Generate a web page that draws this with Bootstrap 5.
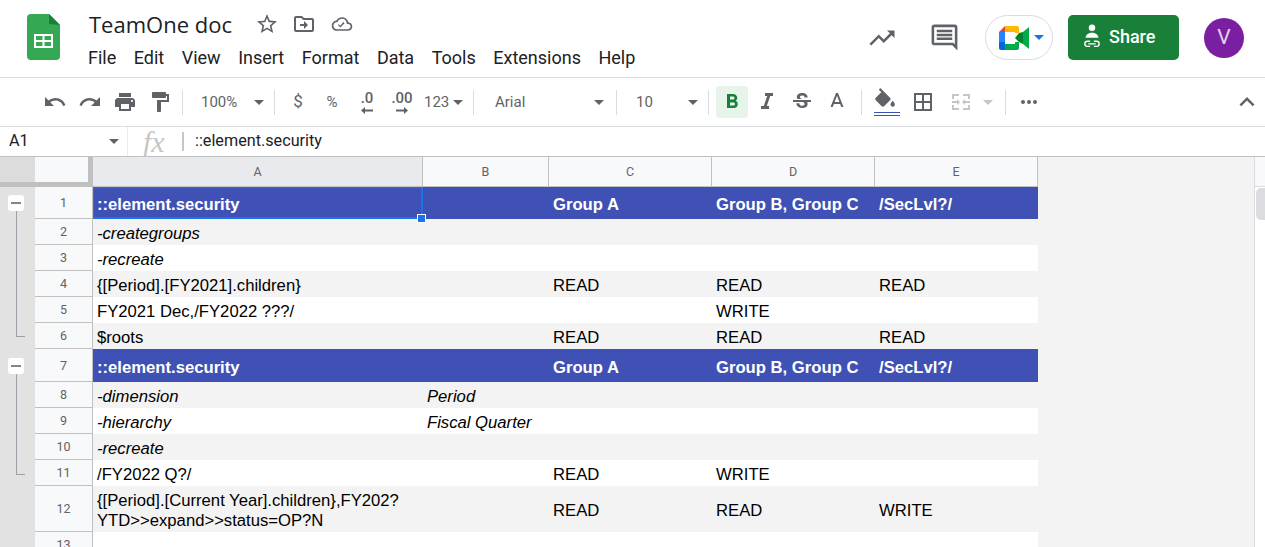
<!DOCTYPE html>
<html lang="en">
<head>
    <meta charset="UTF-8">
    <title>TeamOne doc</title>
    <link href="https://cdn.jsdelivr.net/npm/bootstrap@5.3.0/dist/css/bootstrap.min.css" rel="stylesheet">
    <style>
        html, body {
            height: 547px;
            overflow: hidden;
        }
        body {
            font-family: Roboto, "Liberation Sans", sans-serif;
            color: #202124;
            background: #fff;
        }
        svg { display: block; fill: currentColor; }

        /* title bar */
        .top-bar {
            height: 78px;
            border-bottom: 1px solid #dadce0;
            padding-left: 27px;
            padding-right: 21px;
        }
        .doc-logo { width: 33px; height: 46px; margin-top: 14px; margin-right: 29px; }
        .doc-title { font-family: "Open Sans", sans-serif; font-size: 22px; line-height: 30px; margin-top: 9px; margin-right: 23px; }
        .title-icon { color: #5f6368; margin-top: 12px; margin-right: 13.5px; width: 24px; height: 24px; }
        .menu-row { font-size: 18px; line-height: 24px; margin-top: 7px; margin-left: -1px; gap: 17.5px; }
        .right-icon { color: #5f6368; }
        .meet-pill {
            width: 68px; height: 45px;
            border: 1px solid #dadce0;
            border-radius: 23px;
            padding-left: 13px;
            margin-left: 25px;
            margin-right: 15px;
        }
        .share-btn {
            width: 111px; height: 45px;
            background: #188038;
            border-radius: 5px;
            color: #fff;
            font-size: 18px;
            font-weight: 500;
            padding-left: 14px;
            padding-bottom: 3px;
            gap: 7px;
        }
        .user-pic {
            width: 40px; height: 40px;
            margin-left: 25px;
            background: #7b1fa2;
            color: #e6d5ee;
            font-size: 21px;
        }
        .meet-arrow { border-left: 5px solid transparent; border-right: 5px solid transparent; border-top: 5px solid #1a73e8; margin-left: 5px; }

        /* toolbar */
        .tool-bar {
            height: 49px;
            border-bottom: 1px solid #dadce0;
            padding-left: 37px;
            padding-right: 1px;
            color: #5f6368;
            font-size: 15px;
        }
        .tb-btn { width: 35px; height: 32px; flex: none; }
        .tb-sep { width: 1px; height: 25px; background: #dadce0; flex: none; }
        .tb-caret { border-left: 5px solid transparent; border-right: 5px solid transparent; border-top: 5px solid #5f6368; flex: none; }
        .tb-zoom { width: 91px; padding-left: 18px; padding-right: 10px; }
        .tb-font { width: 142px; padding-left: 21px; padding-right: 12px; }
        .tb-size { width: 91px; padding-left: 19px; padding-right: 10px; }
        .tb-num { width: 49px; margin-left: 4.5px; }
        .tb-more { width: 34px; margin-left: 6px; }
        .btn-active { background: #e6f4ea; color: #188038; border-radius: 3px; width: 32px; margin-left: 7px; margin-right: 1.5px; }
        .dec-text { font-size: 15px; line-height: 15px; font-weight: 500; }
        .dec-arrow { margin-top: 1px; }
        .sign-big { font-size: 17px; margin-left: 5.5px; margin-right: -1px; }
        .sep-first { margin-left: 5px; }
        .sep-fill { margin-left: 6.5px; margin-right: 4.5px; }
        .gap-borders { margin-left: 4px; }
        .gap-merge { margin-left: 3px; }
        .caret-off { border-top-color: #c4c7c5; margin-left: 4.5px; margin-right: 12px; }
        .is-off { color: #c4c7c5; }
        .fill-bar { width: 26px; height: 4px; border-top: 1px solid #3f51b5; border-bottom: 1px solid #3f51b5; margin-top: 2px; margin-left: 5px; }

        /* formula bar */
        .formula-bar {
            height: 30px;
            border-bottom: 1px solid #c0c0c0;
            font-size: 16.2px;
        }
        .name-box { width: 128px; height: 29px; padding: 0 8px 0 9px; border-right: 1px solid #e8eaed; }
        .fx-mark { width: 54px; font-family: "Liberation Serif", serif; font-style: italic; font-size: 30px; color: #c4c7c5; line-height: 1; padding-left: 15px; }
        .fx-sep { width: 2px; height: 19px; background: #c4c7c5; margin-right: 11px; }

        /* sheet */
        .sheet-wrap { height: 390px; overflow: hidden; background: #f3f3f3; }
        .outline-gutter { width: 35px; flex: none; background: #e2e2e2; position: relative; }
        .outline-toggle {
            position: absolute; left: 8px; width: 16px; height: 16px;
            background: #fff; border-radius: 3px;
        }
        .outline-toggle::after {
            content: ""; position: absolute; left: 3px; right: 3px; top: 7px; height: 2px; background: #80868b;
        }
        .toggle-one { top: 38px; }
        .toggle-two { top: 201px; }
        .outline-line {
            position: absolute; left: 16px; width: 9px;
            border-left: 1px solid #9aa0a6; border-bottom: 1px solid #9aa0a6;
        }
        .line-one { top: 54px; height: 126px; }
        .line-two { top: 217px; height: 101px; }
        .gutter-top { height: 30px; background: #dcdcdc; border-bottom: 5px solid #c0c0c0; }

        .sheet-grid {
            table-layout: fixed;
            width: 1003px;
            border-collapse: separate;
            border-spacing: 0;
            flex: none;
            align-self: flex-start;
            font-family: "Liberation Sans", sans-serif;
            font-size: 16.67px;
            color: #000;
            background: #fff;
        }
        .sheet-grid th, .sheet-grid td { padding: 0; }
        .sheet-grid td { padding-left: 4px; padding-right: 4px; white-space: nowrap; line-height: 21px; vertical-align: bottom; padding-bottom: 1px; }
        .sheet-grid td.wrap-cell { white-space: normal; vertical-align: middle; line-height: 20px; padding-top: 4px; padding-bottom: 0; }
        .sheet-grid td.mid-cell { vertical-align: middle; padding-top: 2px; padding-bottom: 0; }
        .col-head th {
            height: 30px;
            padding-top: 1px;
            background: #f8f9fa;
            border-right: 1px solid #c0c0c0;
            border-bottom: 1px solid #c0c0c0;
            color: #5f6368;
            font-family: Roboto, sans-serif;
            font-size: 12.5px;
            font-weight: 400;
            text-align: center;
        }
        .sheet-grid .col-head th.corner { position: relative; border-right: 0; border-bottom: 5px solid #c0c0c0; }
        .corner::after { content: ""; position: absolute; top: 0; right: 0; bottom: 0; width: 5px; background: #c0c0c0; }
        .sheet-grid .col-head th.is-picked, .sheet-grid th.is-picked { background: #e8eaed; }
        .sheet-grid th.row-num {
            padding-top: 2px;
            background: #f8f9fa;
            border-right: 1px solid #c0c0c0;
            border-bottom: 1px solid #c0c0c0;
            color: #5f6368;
            font-family: Roboto, sans-serif;
            font-size: 12.5px;
            font-weight: 400;
            text-align: center;
        }
        .row-std { height: 26px; }
        .row-band td { background: #f3f3f3; }
        .sheet-grid .row-blue td { background: #3f51b5; color: #fff; font-weight: 700; vertical-align: middle; padding-top: 2px; padding-bottom: 0; }
        .sheet-grid .row-second td { padding-top: 4px; }
        .row-first { height: 32px; }
        .row-second { height: 33px; }
        .row-tall { height: 46px; }
        .cell-picked { position: relative; }
        .cell-picked::before { content: ""; position: absolute; top: 0; left: 0; right: 0; bottom: 0; border: 2px solid #1a73e8; border-top-width: 1px; border-left-width: 1px; }
        .cell-handle {
            position: absolute; right: -3px; bottom: -4px; width: 9px; height: 9px;
            background: #1a73e8; border: 1px solid #fff;
        }
        .sheet-blank { flex: 1 1 auto; }
        .scroll-track { width: 11px; flex: none; background: #fff; border-left: 1px solid #dadce0; position: relative; }
        .scroll-head { height: 30px; background: #f8f9fa; border-bottom: 1px solid #dadce0; }
        .scroll-thumb { position: absolute; top: 31px; left: 1px; right: 0; height: 32px; background: #dadce0; border-radius: 5px 0 0 5px; }
    </style>
</head>
<body>
    <!-- Title bar -->
    <header class="top-bar d-flex align-items-start">
        <svg class="doc-logo" viewBox="0 0 33 46">
            <path fill="#34a853" d="M4 0h18l11 11v31a4 4 0 0 1-4 4H4a4 4 0 0 1-4-4V4a4 4 0 0 1 4-4z"/>
            <path fill="#188038" d="M22 0l11 11-11-1z"/>
            <path fill="#fff" d="M7 20h19v14H7zm2 2v4h6.5v-4zm8.500 0v4H24v-4zM9 28v4h6.500v-4zm8.500 0v4H24v-4z" fill-rule="evenodd"/>
        </svg>
        <div>
            <div class="d-flex">
                <div class="doc-title">TeamOne doc</div>
                <svg class="title-icon" viewBox="0 0 24 24"><path d="M22 9.240l-7.190-.620L12 2 9.190 8.630 2 9.240l5.460 4.730L5.820 21 12 17.270 18.180 21l-1.630-7.030L22 9.240zM12 15.400l-3.760 2.270 1-4.280-3.320-2.880 4.380-.380L12 6.100l1.710 4.040 4.380.380-3.320 2.880 1 4.280L12 15.400z"/></svg>
                <svg class="title-icon" viewBox="0 0 24 24"><path d="M20 6h-8l-2-2H4c-1.100 0-2 .9-2 2v12c0 1.100.9 2 2 2h16c1.100 0 2-.9 2-2V8c0-1.100-.9-2-2-2zm0 12H4V6h5.170l2 2H20v10zm-8-1l4-4-4-4v3H8v2h4v3z"/></svg>
                <svg class="title-icon" viewBox="-2 -2 28 28"><path d="M19.350 10.040C18.670 6.590 15.640 4 12 4 9.110 4 6.600 5.640 5.350 8.040 2.340 8.360 0 10.910 0 14c0 3.310 2.690 6 6 6h13c2.760 0 5-2.240 5-5 0-2.640-2.050-4.780-4.650-4.960zM19 18H6c-2.210 0-4-1.790-4-4 0-2.050 1.530-3.760 3.560-3.970l1.070-.110.500-.950C8.080 7.140 9.940 6 12 6c2.620 0 4.880 1.860 5.390 4.430l.3 1.500 1.530.110c1.560.1 2.780 1.410 2.780 2.960 0 1.650-1.350 3-3 3zm-9-3.820l-2.090-2.090L7.500 13.500 10 16l5.010-5.010-1.410-1.410z"/></svg>
            </div>
            <nav class="menu-row d-flex">
                <span>File</span><span>Edit</span><span>View</span><span>Insert</span><span>Format</span><span>Data</span><span>Tools</span><span>Extensions</span><span>Help</span>
            </nav>
        </div>
        <div class="ms-auto d-flex align-items-center" style="height:75px">
            <svg class="right-icon me-4" width="30" height="30" viewBox="0 0 24 24"><path d="M16 6l2.290 2.290-4.880 4.880-4-4L2 16.590 3.410 18l6-6 4 4 6.300-6.290L22 12V6z"/></svg>
            <svg class="right-icon ms-2" width="31" height="31" viewBox="0 0 24 24"><path d="M21.990 4c0-1.100-.89-2-1.990-2H4c-1.100 0-2 .9-2 2v12c0 1.100.9 2 2 2h14l4 4-.01-18zM20 4v13.170L18.830 16H4V4h16zM6 12h12v2H6zm0-3h12v2H6zm0-3h12v2H6z"/></svg>
            <div class="meet-pill d-flex align-items-center">
                <svg width="30" height="24" viewBox="0 0 30 24">
                    <path fill="#ea4335" d="M6 0L0 6h6z"/>
                    <path fill="#2684fc" d="M0 6h6v10H0z"/>
                    <path fill="#0066da" d="M0 16h6v8H2a2 2 0 0 1-2-2z"/>
                    <path fill="#ffba00" d="M6 0h12a2 2 0 0 1 2 2v5h-4V6H6z"/>
                    <path fill="#00ac47" d="M6 18h10v-2h4v6a2 2 0 0 1-2 2H6z"/>
                    <path fill="#00832d" d="M16 12l4-5 4-1v12l-4-2z"/>
                    <path fill="#00ac47" d="M24 6l6-5v22l-6-5z"/>
                </svg>
                <span class="meet-arrow"></span>
            </div>
            <div class="share-btn d-flex align-items-center">
                <svg width="20" height="24" viewBox="3 2 20 26" fill="#fff">
                    <circle cx="13" cy="6" r="3.500"/>
                    <path d="M6 17c0-3.500 4-5.500 7-5.500s7 2 7 5.500z"/>
                    <path d="M8 20h3v1.500H8a2 2 0 0 0 0 4h3V27H8a3.500 3.500 0 0 1 0-7zm7 0h3a3.500 3.500 0 0 1 0 7h-3v-1.500h3a2 2 0 0 0 0-4h-3zM9 22.800h8v1.400H9z"/>
                </svg>
                <span>Share</span>
            </div>
            <div class="user-pic rounded-circle d-flex align-items-center justify-content-center">V</div>
        </div>
    </header>

    <!-- Toolbar -->
    <div class="tool-bar d-flex align-items-center">
        <div class="tb-btn d-flex align-items-center justify-content-center"><svg width="24" height="24" viewBox="0 0 24 24"><path d="M12.500 8c-2.650 0-5.050.99-6.900 2.600L2 7v9h9l-3.620-3.620c1.390-1.160 3.160-1.880 5.120-1.880 3.540 0 6.550 2.310 7.600 5.500l2.370-.78C21.080 11.030 17.150 8 12.500 8z"/></svg></div>
        <div class="tb-btn d-flex align-items-center justify-content-center"><svg width="24" height="24" viewBox="0 0 24 24"><path d="M18.400 10.600C16.550 8.990 14.150 8 11.500 8c-4.650 0-8.580 3.030-9.960 7.220L3.900 16c1.050-3.190 4.050-5.500 7.600-5.500 1.950 0 3.730.72 5.120 1.880L13 16h9V7l-3.600 3.600z"/></svg></div>
        <div class="tb-btn d-flex align-items-center justify-content-center"><svg width="24" height="24" viewBox="0 0 24 24"><path d="M19 8H5c-1.660 0-3 1.340-3 3v6h4v4h12v-4h4v-6c0-1.660-1.340-3-3-3zm-3 11H8v-5h8v5zm3-7c-.55 0-1-.45-1-1s.45-1 1-1 1 .45 1 1-.45 1-1 1zm-1-9H6v4h12V3z"/></svg></div>
        <div class="tb-btn d-flex align-items-center justify-content-center"><svg width="24" height="24" viewBox="0 0 24 24"><path d="M18 4V3c0-.55-.45-1-1-1H5c-.55 0-1 .45-1 1v4c0 .55.45 1 1 1h12c.55 0 1-.45 1-1V6h1v4H9v11c0 .55.45 1 1 1h2c.55 0 1-.45 1-1v-9h8V4h-3z"/></svg></div>
        <span class="tb-sep sep-first"></span>
        <div class="tb-zoom d-flex align-items-center justify-content-between"><span>100%</span><span class="tb-caret"></span></div>
        <span class="tb-sep"></span>
        <div class="tb-btn sign-big d-flex align-items-center justify-content-center">$</div>
        <div class="tb-btn d-flex align-items-center justify-content-center">%</div>
        <div class="tb-btn d-flex flex-column align-items-center justify-content-center">
            <span class="dec-text">.0</span>
            <svg class="dec-arrow" width="12" height="7" viewBox="0 0 12 7"><path d="M4 0v2.500h8v2H4V7L0 3.500z"/></svg>
        </div>
        <div class="tb-btn d-flex flex-column align-items-center justify-content-center">
            <span class="dec-text">.00</span>
            <svg class="dec-arrow" width="12" height="7" viewBox="0 0 12 7"><path d="M8 0v2.500H0v2h8V7l4-3.500z"/></svg>
        </div>
        <div class="tb-num d-flex align-items-center gap-1"><span>123</span><span class="tb-caret"></span></div>
        <span class="tb-sep"></span>
        <div class="tb-font d-flex align-items-center justify-content-between"><span>Arial</span><span class="tb-caret"></span></div>
        <span class="tb-sep"></span>
        <div class="tb-size d-flex align-items-center justify-content-between"><span>10</span><span class="tb-caret"></span></div>
        <span class="tb-sep"></span>
        <div class="tb-btn btn-active d-flex align-items-center justify-content-center"><svg width="24" height="24" viewBox="0 0 24 24"><path d="M15.600 10.790c.97-.67 1.650-1.770 1.650-2.790 0-2.260-1.750-4-4-4H7v14h7.040c2.090 0 3.710-1.700 3.710-3.790 0-1.520-.86-2.820-2.150-3.420zM10 6.500h3c.83 0 1.500.67 1.500 1.500s-.67 1.500-1.500 1.500h-3v-3zm3.500 9H10v-3h3.500c.83 0 1.500.67 1.500 1.500s-.67 1.500-1.500 1.500z"/></svg></div>
        <div class="tb-btn d-flex align-items-center justify-content-center"><svg width="24" height="24" viewBox="0 0 24 24"><path d="M10 4v3h2.210l-3.420 10H6v3h8v-3h-2.210l3.420-10H18V4z" transform="translate(0 -1)"/></svg></div>
        <div class="tb-btn d-flex align-items-center justify-content-center"><svg width="24" height="24" viewBox="0 0 24 24"><path d="M6.850 7.080C6.850 4.370 9.450 3 12.240 3c1.640 0 3 .49 3.900 1.280.77.65 1.460 1.730 1.460 3.240h-3.010c0-.31-.05-.59-.15-.85-.29-.86-1.200-1.280-2.250-1.280-1.860 0-2.340 1.020-2.340 1.700 0 .48.25.88.74 1.210.38.25.77.48 1.410.7H7.390c-.21-.34-.54-.89-.54-1.920zM21 12v-2H3v2h9.620c1.150.45 1.960.75 1.960 1.970 0 1-.81 1.670-2.280 1.670-1.540 0-2.930-.54-2.930-2.510H6.400c0 .55.08 1.130.24 1.580.81 2.290 3.290 3.300 5.670 3.300 2.270 0 5.300-.89 5.300-4.050 0-.3-.01-1.160-.48-1.940H21V12z"/></svg></div>
        <div class="tb-btn d-flex align-items-center justify-content-center"><svg width="24" height="24" viewBox="0 0 24 24"><path d="M11 3L5.500 17h2.250l1.120-3h6.250l1.120 3h2.250L13 3h-2zm-1.380 9L12 5.670 14.380 12H9.620z"/></svg></div>
        <span class="tb-sep sep-fill"></span>
        <div class="tb-btn d-flex flex-column align-items-center justify-content-center">
            <svg width="24" height="22" viewBox="0 0 22 20"><path d="M16.560 8.940L7.620 0 6.210 1.410l2.380 2.380-5.150 5.150c-.59.59-.59 1.540 0 2.120l5.500 5.500c.29.29.68.44 1.060.44s.77-.15 1.060-.44l5.500-5.500c.59-.58.59-1.530 0-2.120zM19 11.500s-2 2.170-2 3.500c0 1.100.9 2 2 2s2-.9 2-2c0-1.330-2-3.500-2-3.500z"/></svg>
            <div class="fill-bar"></div>
        </div>
        <div class="tb-btn gap-borders d-flex align-items-center justify-content-center"><svg width="24" height="24" viewBox="0 0 24 24"><path d="M3 3v18h18V3H3zm8 16H5v-6h6v6zm0-8H5V5h6v6zm8 8h-6v-6h6v6zm0-8h-6V5h6v6z"/></svg></div>
        <div class="tb-btn gap-merge is-off d-flex align-items-center justify-content-center"><svg width="24" height="24" viewBox="0 0 24 24"><path d="M3 4h7v2H5v3H3zm11 0h7v5h-2V6h-5zM3 15h2v3h5v2H3zm16 0h2v5h-7v-2h5zM3 11h5V9l3 3-3 3v-2H3zm18 0h-5V9l-3 3 3 3v-2h5z"/></svg></div>
        <span class="tb-caret caret-off"></span>
        <span class="tb-sep"></span>
        <div class="tb-btn tb-more d-flex align-items-center justify-content-center"><svg width="24" height="24" viewBox="0 0 24 24"><path d="M6 10a2 2 0 1 0 0 4 2 2 0 0 0 0-4zm6 0a2 2 0 1 0 0 4 2 2 0 0 0 0-4zm6 0a2 2 0 1 0 0 4 2 2 0 0 0 0-4z"/></svg></div>
        <div class="tb-btn d-flex align-items-center justify-content-center ms-auto"><svg width="30" height="30" viewBox="0 0 24 24"><path d="M7.410 15.410L12 10.830l4.590 4.580L18 14l-6-6-6 6z"/></svg></div>
    </div>

    <!-- Formula bar -->
    <div class="formula-bar d-flex align-items-center">
        <div class="name-box d-flex align-items-center justify-content-between"><span>A1</span><span class="tb-caret"></span></div>
        <div class="fx-mark">fx</div>
        <div class="fx-sep"></div>
        <div>::element.security</div>
    </div>

    <!-- Sheet -->
    <div class="sheet-wrap d-flex">
        <div class="outline-gutter">
            <div class="gutter-top"></div>
            <div class="outline-line line-one"></div>
            <div class="outline-line line-two"></div>
            <div class="outline-toggle toggle-one"></div>
            <div class="outline-toggle toggle-two"></div>
        </div>
        <table class="sheet-grid">
            <colgroup>
                <col style="width:58px"><col style="width:330px"><col style="width:126px"><col style="width:163px"><col style="width:163px"><col style="width:163px">
            </colgroup>
            <thead>
                <tr class="col-head">
                    <th class="corner"></th><th class="is-picked">A</th><th>B</th><th>C</th><th>D</th><th>E</th>
                </tr>
            </thead>
            <tbody>
                <tr class="row-first row-blue">
                    <th class="row-num is-picked">1</th>
                    <td class="cell-picked">::element.security<span class="cell-handle"></span></td><td></td><td>Group A</td><td>Group B, Group C</td><td>/SecLvl?/</td>
                </tr>
                <tr class="row-std row-band"><th class="row-num">2</th><td class="fst-italic">-creategroups</td><td></td><td></td><td></td><td></td></tr>
                <tr class="row-std"><th class="row-num">3</th><td class="fst-italic">-recreate</td><td></td><td></td><td></td><td></td></tr>
                <tr class="row-std row-band"><th class="row-num">4</th><td>{[Period].[FY2021].children}</td><td></td><td>READ</td><td>READ</td><td>READ</td></tr>
                <tr class="row-std"><th class="row-num">5</th><td>FY2021 Dec,/FY2022 ???/</td><td></td><td></td><td>WRITE</td><td></td></tr>
                <tr class="row-std row-band"><th class="row-num">6</th><td>$roots</td><td></td><td>READ</td><td>READ</td><td>READ</td></tr>
                <tr class="row-second row-blue"><th class="row-num">7</th><td>::element.security</td><td></td><td>Group A</td><td>Group B, Group C</td><td>/SecLvl?/</td></tr>
                <tr class="row-std row-band"><th class="row-num">8</th><td class="fst-italic">-dimension</td><td class="fst-italic">Period</td><td></td><td></td><td></td></tr>
                <tr class="row-std"><th class="row-num">9</th><td class="fst-italic">-hierarchy</td><td class="fst-italic">Fiscal Quarter</td><td></td><td></td><td></td></tr>
                <tr class="row-std row-band"><th class="row-num">10</th><td class="fst-italic">-recreate</td><td></td><td></td><td></td><td></td></tr>
                <tr class="row-std"><th class="row-num">11</th><td>/FY2022 Q?/</td><td></td><td>READ</td><td>WRITE</td><td></td></tr>
                <tr class="row-tall row-band"><th class="row-num">12</th><td class="wrap-cell">{[Period].[Current Year].children},FY202?<br>YTD&gt;&gt;expand&gt;&gt;status=OP?N</td><td></td><td class="mid-cell">READ</td><td class="mid-cell">READ</td><td class="mid-cell">WRITE</td></tr>
                <tr class="row-std"><th class="row-num">13</th><td></td><td></td><td></td><td></td><td></td></tr>
            </tbody>
        </table>
        <div class="sheet-blank"></div>
        <div class="scroll-track">
            <div class="scroll-head"></div>
            <div class="scroll-thumb"></div>
        </div>
    </div>

    <script src="https://cdn.jsdelivr.net/npm/bootstrap@5.3.0/dist/js/bootstrap.bundle.min.js"></script>
</body>
</html>
